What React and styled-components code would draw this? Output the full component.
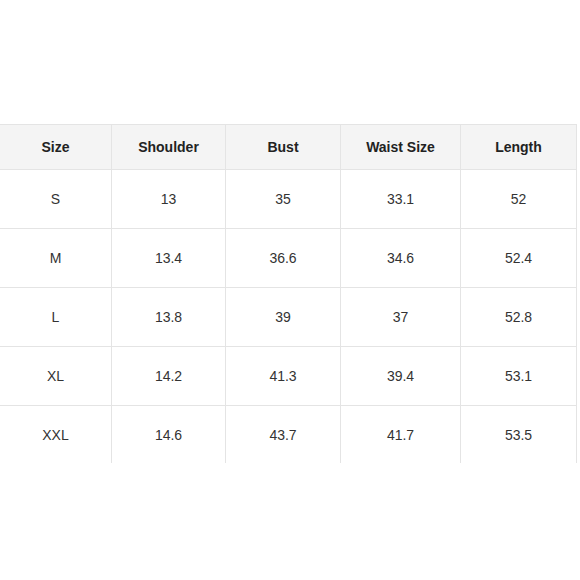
import React from "react";
import styled, { createGlobalStyle } from "styled-components";

const Global = createGlobalStyle`
  html, body { margin: 0; padding: 0; background: #fff; }
  body { font-family: "Liberation Sans", Arial, sans-serif; }
`;

const Page = styled.div`
  width: 580px;
  height: 580px;
  padding-top: 124px;
  box-sizing: border-box;
  overflow: hidden;
`;

const Table = styled.div`
  display: grid;
  grid-template-columns: 112px 114px 115px 120px 116px;
  width: 577px;
  border-top: 1px solid #e4e4e4;
`;

const Cell = styled.div`
  display: flex;
  align-items: center;
  justify-content: center;
  height: ${(p) => (p.$head ? "44px" : p.$last ? "57px" : "58px")};
  border-right: 1px solid #e4e4e4;
  border-bottom: ${(p) => (p.$last ? "none" : "1px solid #e4e4e4")};
  background: ${(p) => (p.$head ? "#f4f4f4" : "#fff")};
  font-size: 14px;
  font-weight: ${(p) => (p.$head ? 700 : 400)};
  color: ${(p) => (p.$head ? "#222" : "#333")};
`;

const headers = ["Size", "Shoulder", "Bust", "Waist Size", "Length"];
const rows = [
  ["S", "13", "35", "33.1", "52"],
  ["M", "13.4", "36.6", "34.6", "52.4"],
  ["L", "13.8", "39", "37", "52.8"],
  ["XL", "14.2", "41.3", "39.4", "53.1"],
  ["XXL", "14.6", "43.7", "41.7", "53.5"],
];

export default function App() {
  return (
    <>
      <Global />
      <Page>
        <Table>
          {headers.map((h) => (
            <Cell key={h} $head>
              {h}
            </Cell>
          ))}
          {rows.map((r, i) =>
            r.map((v, j) => (
              <Cell key={i + "-" + j} $last={i === rows.length - 1}>
                {v}
              </Cell>
            ))
          )}
        </Table>
      </Page>
    </>
  );
}
